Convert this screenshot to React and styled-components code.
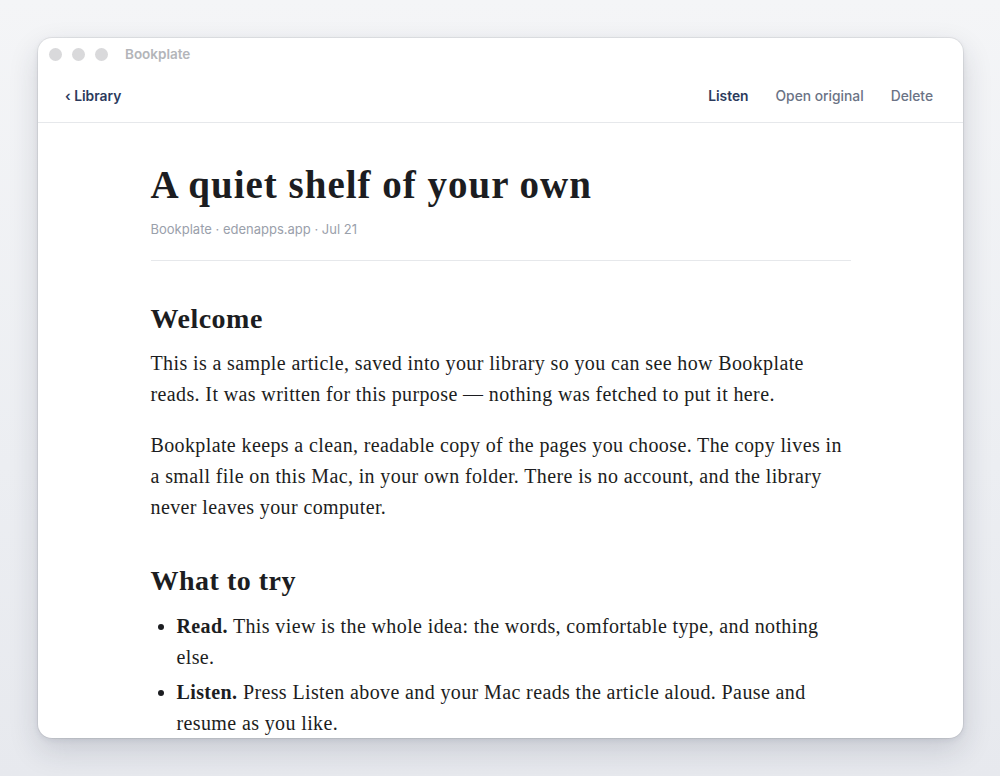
import React from "react";
import styled, { createGlobalStyle } from "styled-components";

const GlobalStyle = createGlobalStyle`
  html, body {
    margin: 0;
    padding: 0;
    background: #eceef2;
  }
  body {
    width: 1000px;
    height: 776px;
    overflow: hidden;
    background: linear-gradient(180deg, #f4f5f7 0%, #eceef2 60%, #e7e9ee 100%);
  }
`;

const Page = styled.div`
  padding: 38px 37px 0 38px;
`;

const Window = styled.div`
  height: 700px;
  background: #ffffff;
  border-radius: 14px;
  overflow: hidden;
  display: flex;
  flex-direction: column;
  box-shadow: 0 0 0 1px rgba(0, 0, 0, 0.06), 0 12px 30px rgba(30, 40, 60, 0.16), 0 2px 6px rgba(30, 40, 60, 0.08);
`;

const TitleBar = styled.div`
  height: 32px;
  display: flex;
  align-items: center;
  padding: 0 11px;
  font-family: Inter, "Liberation Sans", sans-serif;
`;

const Lights = styled.div`
  display: flex;
  gap: 10px;
`;

const Light = styled.span`
  width: 13px;
  height: 13px;
  border-radius: 50%;
  background: #d9d9db;
`;

const AppName = styled.span`
  font-size: 13.5px;
  font-weight: 600;
  color: #b3b5b9;
  margin-left: 17px;
`;

const Nav = styled.nav`
  height: 52px;
  display: flex;
  align-items: center;
  justify-content: space-between;
  padding: 0 30px 0 27px;
  border-bottom: 1px solid #e6e8eb;
  font-family: Inter, "Liberation Sans", sans-serif;
  font-size: 13.8px;
`;

const NavLink = styled.a`
  color: ${(p) => (p.$strong ? "#2b3a5c" : "#6b7385")};
  font-weight: ${(p) => (p.$strong ? 600 : 500)};
  text-decoration: none;
  cursor: pointer;
`;

const Actions = styled.div`
  display: flex;
  gap: 27px;
`;

const Scroll = styled.div`
  flex: 1;
  overflow: hidden;
`;

const Article = styled.article`
  width: 700px;
  margin: 0 auto;
  padding-top: 38px;
  color: #1c1d21;
  font-family: "Liberation Serif", "DejaVu Serif", serif;
`;

const Title = styled.h1`
  margin: 0;
  font-size: 39px;
  line-height: 48px;
  font-weight: 700;
  letter-spacing: 1px;
`;

const Meta = styled.div`
  margin-top: 12px;
  font-family: Inter, "Liberation Sans", sans-serif;
  font-size: 13px;
  color: #9aa0ab;
  padding-bottom: 23px;
  border-bottom: 1px solid #e6e8eb;
`;

const Heading = styled.h2`
  margin: 40px 0 ${(p) => (p.$tight ? "12px" : "11px")};
  font-size: 28px;
  line-height: 36px;
  font-weight: 700;
  letter-spacing: 0.5px;
`;

const Para = styled.p`
  margin: 0 0 20px;
  font-size: 20px;
  line-height: 31px;
  letter-spacing: 0.38px;
`;

const List = styled.ul`
  margin: 0;
  padding-left: 26px;
  font-size: 20px;
  line-height: 31px;
  letter-spacing: 0.38px;
`;

const Item = styled.li`
  margin-bottom: 4px;
`;

const intro = [
  "This is a sample article, saved into your library so you can see how Bookplate reads. It was written for this purpose — nothing was fetched to put it here.",
  "Bookplate keeps a clean, readable copy of the pages you choose. The copy lives in a small file on this Mac, in your own folder. There is no account, and the library never leaves your computer.",
];

const items = [
  ["Read.", "This view is the whole idea: the words, comfortable type, and nothing else."],
  ["Listen.", "Press Listen above and your Mac reads the article aloud. Pause and resume as you like."],
];

const App = () => (
  <>
    <GlobalStyle />
    <Page>
      <Window>
        <TitleBar>
          <Lights>
            <Light />
            <Light />
            <Light />
          </Lights>
          <AppName>Bookplate</AppName>
        </TitleBar>
        <Nav>
          <NavLink $strong>‹ Library</NavLink>
          <Actions>
            <NavLink $strong>Listen</NavLink>
            <NavLink>Open original</NavLink>
            <NavLink>Delete</NavLink>
          </Actions>
        </Nav>
        <Scroll>
          <Article>
            <Title>A quiet shelf of your own</Title>
            <Meta>Bookplate · edenapps.app · Jul 21</Meta>
            <Heading>Welcome</Heading>
            {intro.map((t) => (
              <Para key={t}>{t}</Para>
            ))}
            <Heading $tight>What to try</Heading>
            <List>
              {items.map(([b, t]) => (
                <Item key={b}>
                  <strong>{b}</strong> {t}
                </Item>
              ))}
            </List>
          </Article>
        </Scroll>
      </Window>
    </Page>
  </>
);

export default App;
